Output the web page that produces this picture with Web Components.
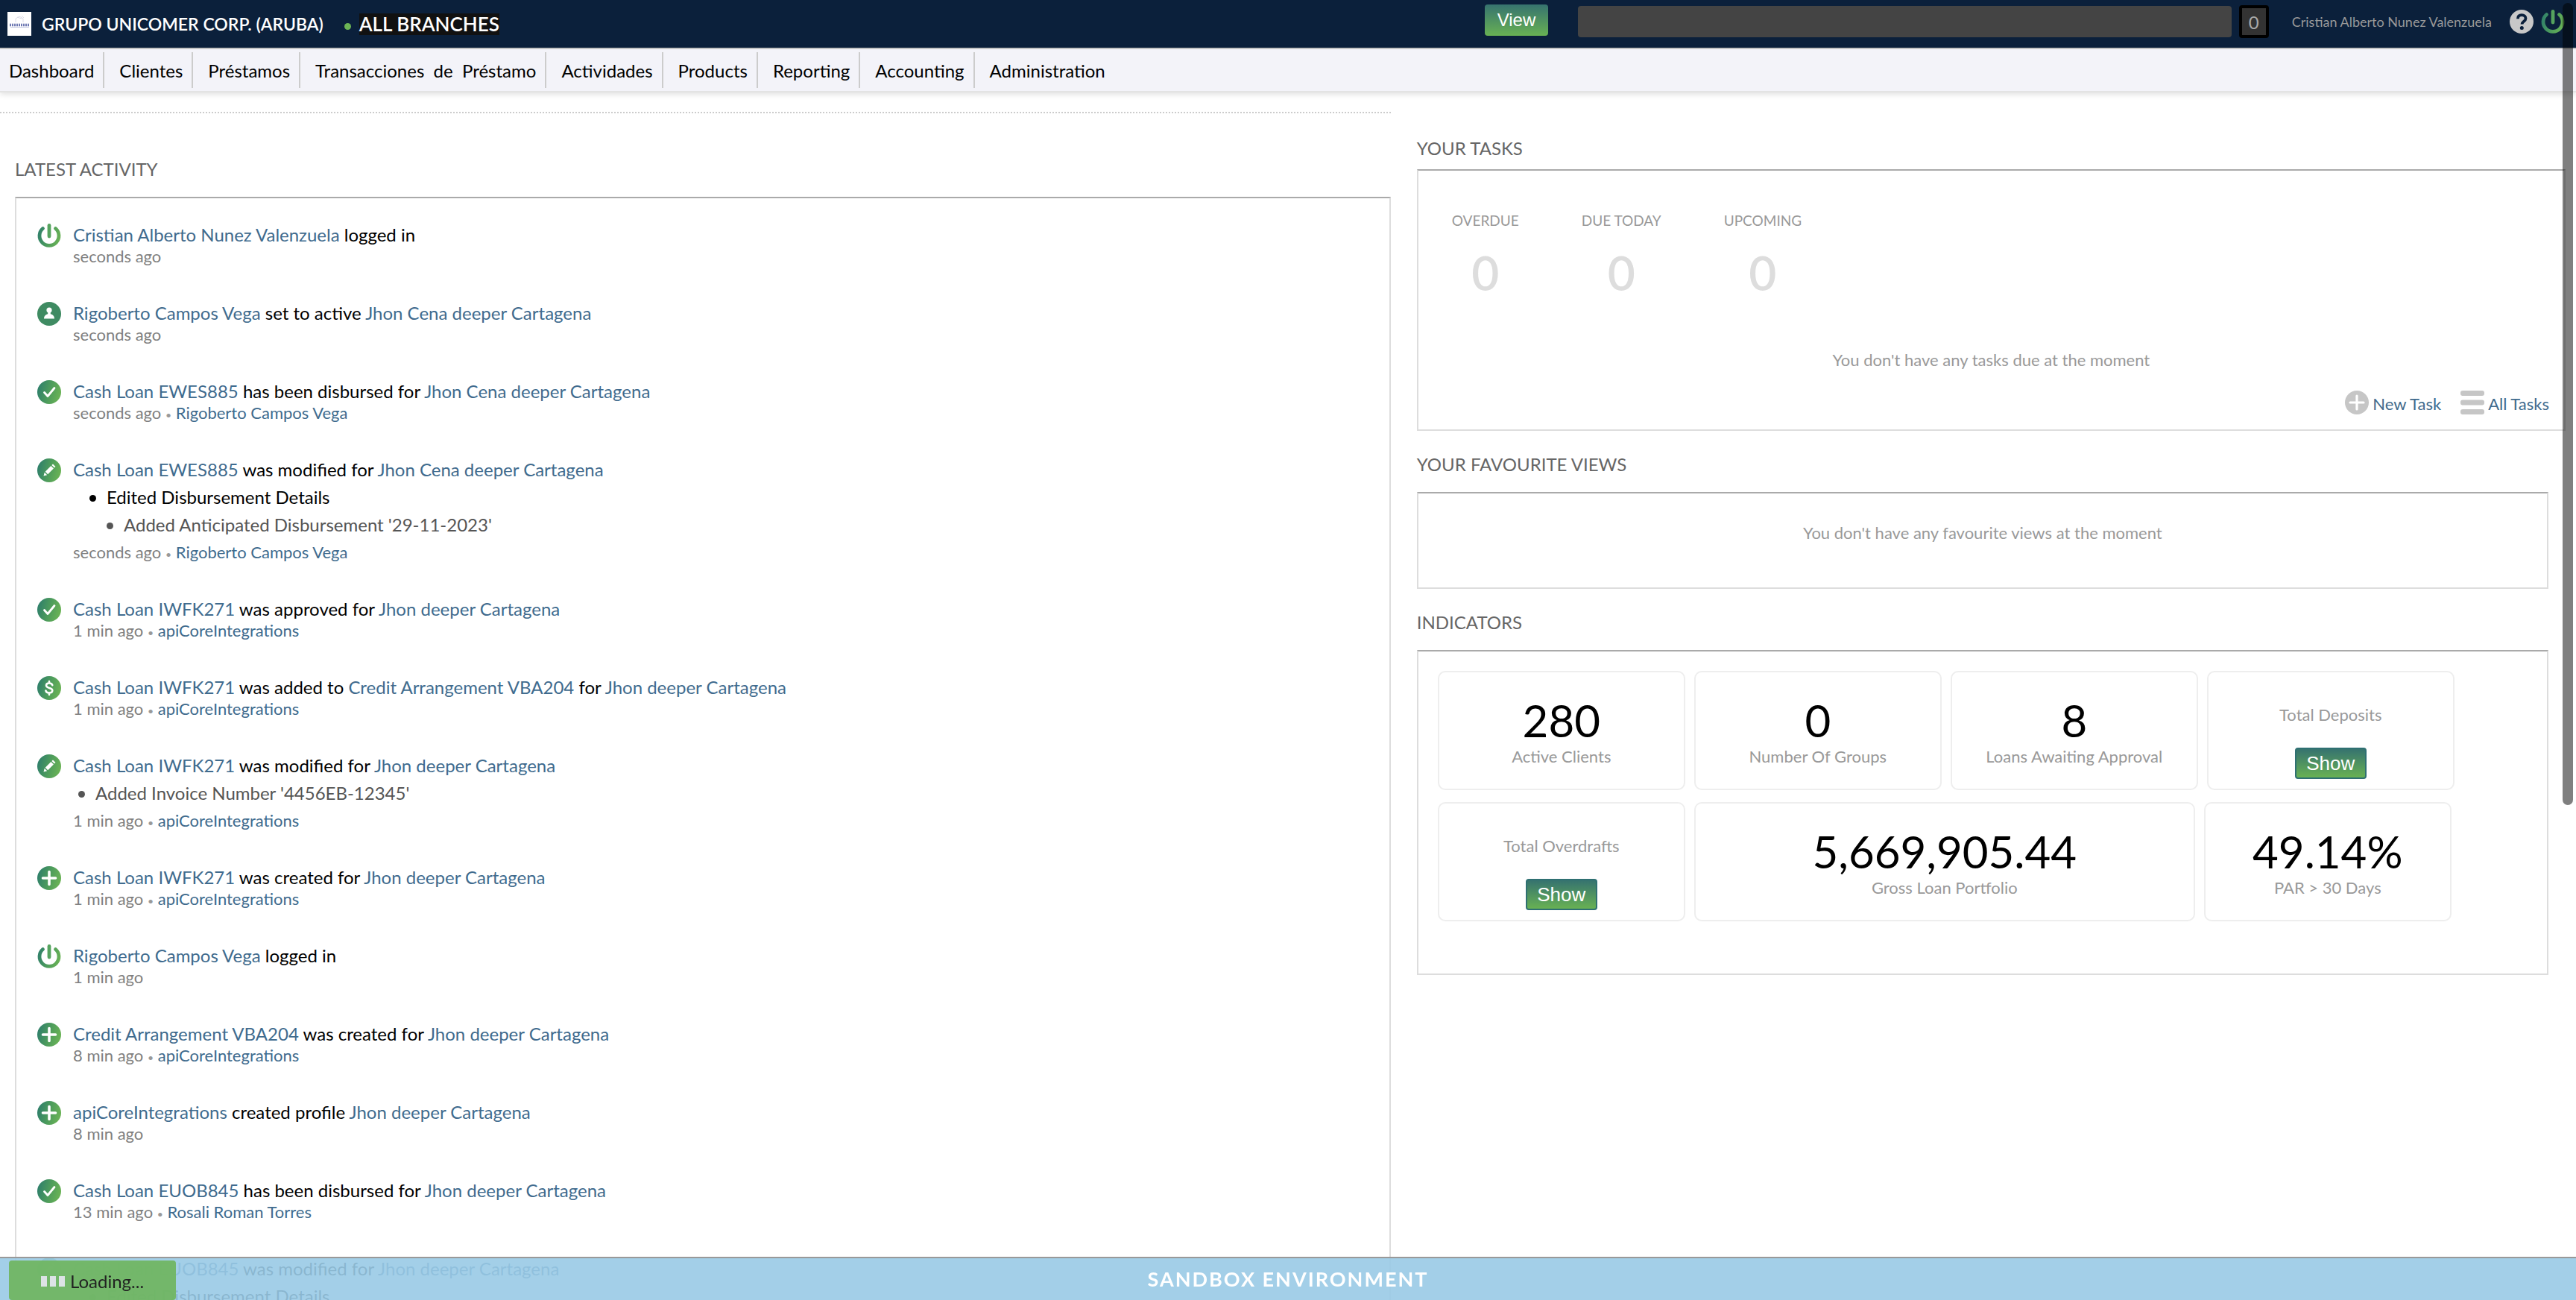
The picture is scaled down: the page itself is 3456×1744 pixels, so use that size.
<!DOCTYPE html>
<html lang="es">
<head>
<meta charset="utf-8">
<title>Dashboard</title>
<style>
  html { height: 100%; }
  body {
    margin: 0;
    height: 100vh;
    overflow: hidden;
    background: #fff;
    color: #000;
    font: 24px/30px Lato, "Noto Sans", sans-serif;
  }
  a { color: #406b8e; text-decoration: none; }
  .columns { display: flex; align-items: flex-start; }
  .left { width: 54%; }
  .left hr {
    margin: 26px 0 60px;
    height: 2px;
    border: 0;
    background: repeating-linear-gradient(90deg, #ccc 0 2px, #fff 2px 4px);
  }
  .left section-panel { margin-left: 20px; }
  .right {
    flex: 1;
    display: flex;
    flex-direction: column;
    gap: 30px;
    margin-left: 1%;
    padding: 60px 37px 0 0;
  }
  .wide { margin-right: -23px; --heading-gap: 13px; }
  ul { list-style: none; margin: 0; padding: 0; line-height: 37px; }
  li { color: #555; }
  li::before {
    content: "";
    display: inline-block;
    width: 9px;
    height: 9px;
    margin-right: 14px;
    border-radius: 50%;
    background: currentColor;
    vertical-align: 3px;
  }
  ul.flat { padding-left: 7px; }
  ul.nested { padding-left: 22px; }
  ul.nested > li { color: #000; }
  ul.nested ul { padding-left: 23px; }
</style>
</head>
<body>

<app-header company="GRUPO UNICOMER CORP. (ARUBA)" branch="ALL BRANCHES" user="Cristian Alberto Nunez Valenzuela" count="0"></app-header>

<app-nav>
  <nav-item>Dashboard</nav-item>
  <nav-item>Clientes</nav-item>
  <nav-item>Préstamos</nav-item>
  <nav-item>Transacciones&nbsp; de&nbsp; Préstamo</nav-item>
  <nav-item>Actividades</nav-item>
  <nav-item>Products</nav-item>
  <nav-item>Reporting</nav-item>
  <nav-item>Accounting</nav-item>
  <nav-item>Administration</nav-item>
</app-nav>

<main class="columns">
  <div class="left">
    <hr>
    <section-panel heading="LATEST ACTIVITY">
      <activity-feed>
        <activity-item icon="power" when="seconds ago"><a href="#">Cristian Alberto Nunez Valenzuela</a> logged in</activity-item>
        <activity-item icon="person" when="seconds ago"><a href="#">Rigoberto Campos Vega</a> set to active <a href="#">Jhon Cena deeper Cartagena</a></activity-item>
        <activity-item icon="check" when="seconds ago" by="Rigoberto Campos Vega"><a href="#">Cash Loan EWES885</a> has been disbursed for <a href="#">Jhon Cena deeper Cartagena</a></activity-item>
        <activity-item icon="pencil" when="seconds ago" by="Rigoberto Campos Vega"><a href="#">Cash Loan EWES885</a> was modified for <a href="#">Jhon Cena deeper Cartagena</a>
          <ul slot="changes" class="nested"><li>Edited Disbursement Details<ul><li>Added Anticipated Disbursement '29-11-2023'</li></ul></li></ul>
        </activity-item>
        <activity-item icon="check" when="1 min ago" by="apiCoreIntegrations"><a href="#">Cash Loan IWFK271</a> was approved for <a href="#">Jhon deeper Cartagena</a></activity-item>
        <activity-item icon="dollar" when="1 min ago" by="apiCoreIntegrations"><a href="#">Cash Loan IWFK271</a> was added to <a href="#">Credit Arrangement VBA204</a> for <a href="#">Jhon deeper Cartagena</a></activity-item>
        <activity-item icon="pencil" when="1 min ago" by="apiCoreIntegrations"><a href="#">Cash Loan IWFK271</a> was modified for <a href="#">Jhon deeper Cartagena</a>
          <ul slot="changes" class="flat"><li>Added Invoice Number '4456EB-12345'</li></ul>
        </activity-item>
        <activity-item icon="plus" when="1 min ago" by="apiCoreIntegrations"><a href="#">Cash Loan IWFK271</a> was created for <a href="#">Jhon deeper Cartagena</a></activity-item>
        <activity-item icon="power" when="1 min ago"><a href="#">Rigoberto Campos Vega</a> logged in</activity-item>
        <activity-item icon="plus" when="8 min ago" by="apiCoreIntegrations"><a href="#">Credit Arrangement VBA204</a> was created for <a href="#">Jhon deeper Cartagena</a></activity-item>
        <activity-item icon="plus" when="8 min ago"><a href="#">apiCoreIntegrations</a> created profile <a href="#">Jhon deeper Cartagena</a></activity-item>
        <activity-item icon="check" when="13 min ago" by="Rosali Roman Torres"><a href="#">Cash Loan EUOB845</a> has been disbursed for <a href="#">Jhon deeper Cartagena</a></activity-item>
        <activity-item icon="pencil"><a href="#">Cash Loan EUOB845</a> was modified for <a href="#">Jhon deeper Cartagena</a>
          <ul slot="changes" class="nested"><li>Edited Disbursement Details</li></ul>
        </activity-item>
      </activity-feed>
    </section-panel>
  </div>

  <div class="right">
    <section-panel class="wide" heading="YOUR TASKS">
      <task-summary>
        <task-count label="OVERDUE">0</task-count>
        <task-count label="DUE TODAY">0</task-count>
        <task-count label="UPCOMING">0</task-count>
      </task-summary>
    </section-panel>

    <section-panel heading="YOUR FAVOURITE VIEWS">
      <empty-note>You don't have any favourite views at the moment</empty-note>
    </section-panel>

    <section-panel heading="INDICATORS">
      <indicator-grid>
        <indicator-card label="Active Clients">280</indicator-card>
        <indicator-card label="Number Of Groups">0</indicator-card>
        <indicator-card label="Loans Awaiting Approval">8</indicator-card>
        <indicator-card label="Total Deposits" deferred></indicator-card>
        <indicator-card label="Total Overdrafts" deferred></indicator-card>
        <indicator-card label="Gross Loan Portfolio" wide>5,669,905.44</indicator-card>
        <indicator-card label="PAR &gt; 30 Days">49.14%</indicator-card>
      </indicator-grid>
    </section-panel>
  </div>
</main>

<environment-bar>SANDBOX ENVIRONMENT</environment-bar>
<loading-badge>Loading...</loading-badge>
<scroll-thumb></scroll-thumb>

<script>
const define = (name, render) => customElements.define(name, class extends HTMLElement {
  connectedCallback() {
    if (this.shadowRoot) return;
    const root = this.attachShadow({ mode: "open" });
    const tpl = document.createElement("template");
    tpl.innerHTML = render(this);
    root.append(tpl.content.cloneNode(true));
  }
});
const attr = (el, name) => (el.getAttribute(name) || "").replace(/&/g, "&amp;").replace(/</g, "&lt;").replace(/>/g, "&gt;");

const disc = '<circle cx="16" cy="16" r="16" fill="url(#g)"/>';
const line = (d, w) => `<path d="${d}" fill="none" stroke="#fff" stroke-width="${w}" stroke-linecap="round" stroke-linejoin="round"/>`;
const ICONS = {
  power: '<path d="M7.500 6.500A13 13 0 1 0 24.500 6.500" fill="none" stroke="url(#g)" stroke-width="4.800" stroke-linecap="round"/><rect x="13.600" y="0" width="4.800" height="19.500" rx="2.400" fill="#55a35e"/>',
  person: '<circle cx="16" cy="16" r="16" fill="#3f8b62"/><circle cx="16" cy="11" r="3.600" fill="#fff"/><path d="M9 22.500c0-4 2.500-5.500 5.200-6.300v-3h3.600v3c2.700.8 5.200 2.300 5.200 6.300z" fill="#fff"/>',
  check: disc + line("M9.500 16.500l4.500 5L23 10.500", 2.8),
  pencil: disc + '<path d="M8.500 23.500l1.200-4.700 3.500 3.500zM10.700 17.800l7.700-7.700 3.500 3.500-7.700 7.700zM19.400 9.100l1.600-1.600 3.500 3.500-1.600 1.600z" fill="#fff"/>',
  dollar: disc + line("M20.300 12.200c-.5-1.800-2-2.700-4.300-2.700-2.400 0-4 1.200-4 3.100 0 4.400 8.300 2.300 8.300 6.700 0 2-1.700 3.200-4.300 3.200-2.500 0-4.200-1-4.600-3M16 7v2.500M16 22.500V25", 2.6),
  plus: disc + line("M16 7.500v17M7.500 16h17", 3.6),
  help: '<circle cx="16" cy="16" r="16" fill="#c8c8c8"/><path d="M11 12.200c0-3.200 2-5 5.200-5s5.300 1.800 5.300 4.600c0 3.900-5 4-5 7.700" fill="none" stroke="#0b203b" stroke-width="3.800"/><circle cx="16.300" cy="24.500" r="2.500" fill="#0b203b"/>',
  add: '<circle cx="16" cy="16" r="16" fill="#c6c6c6"/>' + line("M16 7v18M7 16h18", 3.2),
  list: '<rect y="0" width="32" height="7" rx="3" fill="#c6c6c6"/><rect y="12.500" width="32" height="7" rx="3" fill="#c6c6c6"/><rect y="25" width="32" height="7" rx="3" fill="#c6c6c6"/>'
};

define("app-icon", el => `
  <style>:host{display:block;flex:none;width:32px;height:32px}svg{display:block;width:100%;height:100%}</style>
  <svg viewBox="0 0 32 32" aria-hidden="true"><defs><linearGradient id="g" gradientUnits="userSpaceOnUse" x1="0" y1="12" x2="32" y2="20"><stop offset="0" stop-color="#2f7f6b"/><stop offset=".5" stop-color="#4d9c5c"/><stop offset="1" stop-color="#6cb455"/></linearGradient></defs>${ICONS[el.getAttribute("name")]}</svg>`);

define("app-header", el => `
  <style>
    :host{display:flex;justify-content:space-between;height:64px;background:#0b203b;border-bottom:2px solid #ccc}
    .brand,.tools{display:flex;align-items:center}
    .brand{height:64px;padding-left:10px;color:#fff;font-size:23px;font-weight:600}
    .logo{width:32px;height:32px;margin-right:14px}
    .dot{width:9px;height:9px;margin:6px 11px 0 28px;border-radius:50%;background:#6cb455}
    .branch{background:#111;font-size:26px;line-height:29px}
    .tools{flex:0 1 1449px;height:58px;padding-right:15px}
    button{flex:none;width:85px;height:42px;margin:0 40px 4px 0;padding:0;border:0;border-radius:4px;background:linear-gradient(#36736f,#68b153);color:#fff;font:24px "Liberation Sans",sans-serif}
    input{flex:1;min-width:0;height:42px;box-sizing:border-box;border:0;border-radius:4px;background:#444;color:#ccc;font:inherit}
    .count{flex:none;box-sizing:border-box;width:40px;height:44px;margin:0 31px 0 10px;border:4px solid #000;border-radius:4px;background:#333;color:#aaa;line-height:38px;text-align:center}
    a{display:block;text-decoration:none}
    .user{margin-right:14px;color:#999;font-size:18px;white-space:nowrap}
    a + a{margin-left:10px}
  </style>
  <div class="brand">
    <svg class="logo" viewBox="0 0 32 32" aria-hidden="true"><rect width="32" height="32" fill="#fff"/><path d="M11 14V9l5-3 5 3v5M13 7l6 2M19 5l3 3" fill="none" stroke="#dcdce8"/><path d="M3 16.500h27M3 18.500h26" stroke="#5561a5" stroke-width="1.600" stroke-dasharray="2 1"/><path d="M4 20.500h25" stroke="#c3c8e2" stroke-width="1"/></svg>
    <span>${attr(el, "company")}</span><span class="dot"></span><span class="branch">${attr(el, "branch")}</span>
  </div>
  <div class="tools">
    <button type="button">View</button>
    <input type="text" aria-label="Search">
    <span class="count">${attr(el, "count")}</span>
    <a class="user" href="#">${attr(el, "user")}</a>
    <a href="#" aria-label="Help"><app-icon name="help"></app-icon></a>
    <a href="#" aria-label="Log out"><app-icon name="power"></app-icon></a>
  </div>`);

define("app-nav", () => `
  <style>
    :host{display:block;position:relative;background:#f3f3f9;border-bottom:2px solid #e3e3e3;box-shadow:0 2px 8px rgba(0,0,0,.14)}
    nav{display:flex;padding:4px 0}
    ::slotted(nav-item:first-child){--lead:12px}
    ::slotted(nav-item:last-child){--rule:transparent}
  </style><nav><slot></slot></nav>`);

define("nav-item", () => `
  <style>
    :host{display:block;border-right:2px solid var(--rule,#ccc)}
    a{display:block;padding:2px 12px 0 var(--lead,20px);color:#000;line-height:46px;text-decoration:none;white-space:pre}
  </style><a href="#"><slot></slot></a>`);

define("section-panel", el => `
  <style>
    :host{display:block}
    h2{margin:0 0 var(--heading-gap,22px);color:#666;font-size:24px;font-weight:400;line-height:30px}
    .box{border:2px solid #ddd;border-top-color:#aaa}
  </style><h2>${attr(el, "heading")}</h2><div class="box"><slot></slot></div>`);

define("activity-feed", () => `
  <style>:host{display:flex;flex-direction:column;gap:47px;padding:34px 28px 60px}</style><slot></slot>`);

define("activity-item", el => `
  <style>
    :host{display:flex;gap:16px}
    .meta{min-height:28px;color:#808080;font-size:22px;line-height:28px}
    .dot{color:#999;font-size:14px;line-height:1}
    a{color:#406b8e;text-decoration:none}
    ::slotted(ul){margin:3px 0 5px !important}
  </style>
  <app-icon name="${attr(el, "icon")}"></app-icon>
  <div><div><slot></slot></div><slot name="changes"></slot>
  <div class="meta">${attr(el, "when")}${el.hasAttribute("by") ? ` <span class="dot">•</span> <a href="#">${attr(el, "by")}</a>` : ""}</div></div>`);

define("empty-note", () => `
  <style>:host{display:block;padding:39px 0 59px;color:#999;font-size:22px;line-height:28px;text-align:center}</style><slot></slot>`);

define("task-count", el => `
  <style>
    :host{display:block;color:#999;text-align:center}
    .label{font-size:19px;line-height:24px}
    .value{margin-top:20px;color:#ddd;font-size:64px;line-height:76px;font-weight:600}
  </style><div class="label">${attr(el, "label")}</div><div class="value"><slot></slot></div>`);

define("task-summary", () => `
  <style>
    :host{display:block;padding:55px 20px 20px 0}
    .counts{display:flex;gap:84px;padding-left:45px}
    .note{margin:65px -20px 27px 0;color:#999;font-size:22px;line-height:28px;text-align:center}
    .links{display:flex;justify-content:flex-end;gap:26px}
    a{display:flex;align-items:flex-end;gap:5px;color:#406b8e;font-size:22px;line-height:28px;text-decoration:none}
  </style>
  <div class="counts"><slot></slot></div>
  <div class="note">You don't have any tasks due at the moment</div>
  <div class="links"><a href="#"><app-icon name="add"></app-icon>New Task</a><a href="#"><app-icon name="list"></app-icon>All Tasks</a></div>`);

define("indicator-grid", () => `
  <style>:host{display:flex;flex-wrap:wrap;gap:16px 12px;padding:26px 26px 70px}</style><slot></slot>`);

define("indicator-card", el => `
  <style>
    :host{display:block;box-sizing:border-box;width:332px;height:160px;padding-top:29px;border:2px solid #eee;border-radius:10px;text-align:center}
    :host([wide]){width:672px}
    :host([deferred]){padding-top:43px}
    .value{font-size:60px;line-height:70px}
    .label{color:#999;font-size:22px;line-height:28px}
    button{box-sizing:border-box;width:96px;height:42px;margin-top:30px;padding:0;border:2px solid #2f7072;border-radius:4px;background:linear-gradient(#36736f,#68b153);color:#fff;font:26px "Liberation Sans",sans-serif}
  </style>
  ${el.hasAttribute("deferred")
    ? `<div class="label">${attr(el, "label")}</div><button type="button">Show</button>`
    : `<div class="value"><slot></slot></div><div class="label">${attr(el, "label")}</div>`}`);

define("environment-bar", () => `
  <style>:host{display:block;position:fixed;left:0;right:0;bottom:0;height:56px;border-top:2px solid #999;background:rgba(153,202,229,.9);background-clip:padding-box;color:#fff;font-size:27px;font-weight:700;line-height:56px;letter-spacing:2px;text-align:center}</style><slot></slot>`);

define("loading-badge", () => `
  <style>
    :host{display:flex;align-items:center;gap:7px;position:fixed;left:12px;bottom:0;box-sizing:border-box;width:224px;height:53px;padding:2px 0 0 43px;border-radius:4px;background:rgba(112,182,98,.94);color:#222}
    svg{width:32px;height:14px}
  </style><svg viewBox="0 0 32 14" aria-hidden="true"><path d="M0 0h8v14H0zM12 0h8v14h-8zM24 0h8v14h-8z" fill="#dde3e6"/></svg><span><slot></slot></span>`);

define("scroll-thumb", () => `
  <style>:host{display:block;position:fixed;top:4px;right:4px;width:14px;height:61.7vh;border-radius:7px;background:rgba(0,0,0,.5)}</style>`);
</script>
</body>
</html>
